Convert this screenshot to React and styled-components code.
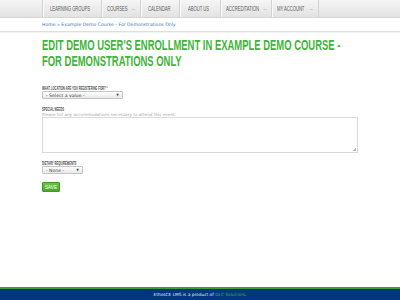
import React from 'react';
import styled, { createGlobalStyle } from 'styled-components';

const GlobalStyle = createGlobalStyle`
  html, body {
    margin: 0;
    padding: 0;
    background: #ffffff;
  }
  body {
    font-family: "Liberation Sans", Arial, sans-serif;
  }
  #root {
    min-height: 300px;
  }
`;

const Page = styled.div`
  display: flex;
  flex-direction: column;
  min-height: 300px;
  width: 400px;
`;

const NavBar = styled.nav`
  height: 17px;
  background: linear-gradient(#f6f6f6, #e2e2e2);
  border-bottom: 1px solid #d6d6d6;
  display: flex;
  justify-content: center;
`;

const NavInner = styled.ul`
  list-style: none;
  margin: 0;
  padding: 0;
  width: 316px;
  display: flex;
`;

const NavItem = styled.li`
  width: ${p => p.$w}px;
  flex: none;
  display: flex;
  align-items: center;
  justify-content: center;
  gap: 3px;
  border-left: 1px solid #d2d2d2;
  box-shadow: inset 1px 0 0 #fafafa;
  font-family: "Liberation Sans", Arial, sans-serif;
  font-size: 6.4px;
  color: #5e5e5e;
  text-transform: uppercase;
  white-space: nowrap;
  &:last-child {
    border-right: 1px solid #d2d2d2;
  }
`;

const NavLabel = styled.span`
  display: inline-block;
  width: ${p => p.$w}px;
  white-space: nowrap;
  transform: scaleX(0.66);
  transform-origin: left center;
  letter-spacing: -0.1px;
`;

const Caret = styled.span`
  color: #a8a8a8;
  font-size: 5px;
`;

const Crumbs = styled.div`
  display: flex;
  justify-content: center;
  border-bottom: 1px solid #dedede;
  box-shadow: 0 1px 1px rgba(0, 0, 0, 0.05);
  padding: 4px 0 4px;
`;

const CrumbText = styled.div`
  width: 316px;
  font-family: "DejaVu Sans", sans-serif;
  font-size: 4.6px;
  color: #3d72b8;
`;

const Content = styled.main`
  width: 316px;
  margin: 0 auto;
  flex: 1;
  padding-top: 5px;
`;

const Title = styled.h1`
  margin: 0 0 17px;
  font-family: "Liberation Sans", Arial, sans-serif;
  font-weight: bold;
  font-size: 15px;
  color: #3fb53a;
  text-transform: uppercase;
  white-space: nowrap;
  transform: scaleX(0.63);
  transform-origin: left top;
`;

const TitleLine = styled.span`
  display: block;
  height: 16px;
  line-height: 16px;
`;

const Field = styled.div`
  display: flex;
  flex-direction: column;
  align-items: flex-start;
  margin-bottom: ${p => p.$gap || 8}px;
`;

const Label = styled.label`
  display: inline-block;
  font-family: "Liberation Sans", Arial, sans-serif;
  font-weight: bold;
  font-size: 4.8px;
  line-height: 5px;
  color: #4a4a4a;
  text-transform: uppercase;
  white-space: nowrap;
  transform: scaleX(0.57);
  transform-origin: left center;
`;

const Required = styled.span`
  color: #d03030;
`;

const Hint = styled.div`
  font-family: "DejaVu Sans", sans-serif;
  font-size: 4.2px;
  line-height: 5px;
  color: #a8a8a8;
`;

const Select = styled.div`
  width: ${p => p.$w}px;
  height: 8px;
  box-sizing: border-box;
  border: 1px solid #c4c4c4;
  border-radius: 1px;
  background: linear-gradient(#ffffff, #e8e8e8);
  display: flex;
  align-items: center;
  justify-content: space-between;
  padding: 0 3px;
  font-family: "DejaVu Sans", sans-serif;
  font-size: 4.6px;
  color: #444;
`;

const Arrow = styled.span`
  font-size: 3.5px;
  color: #555;
`;

const TextArea = styled.div`
  width: 316px;
  height: 36px;
  box-sizing: border-box;
  border: 1px solid #dadada;
  position: relative;
`;

const Grip = styled.span`
  position: absolute;
  right: 1px;
  bottom: 1px;
  width: 3px;
  height: 3px;
  background: linear-gradient(135deg, transparent 50%, #bbb 50%);
`;

const SaveButton = styled.button`
  display: flex;
  align-items: center;
  justify-content: center;
  width: 18px;
  height: 10px;
  padding: 0;
  border: 1px solid #3f9a22;
  border-radius: 1px;
  background: linear-gradient(#6cc63c, #4aa82a);
  color: #fff;
  font-family: "Liberation Sans", Arial, sans-serif;
  font-size: 4.6px;
  text-transform: uppercase;
`;

const Footer = styled.footer`
  border-top: 2px solid #3c9e3c;
  background: #003580;
  height: 11px;
  display: flex;
  align-items: center;
  justify-content: center;
  font-family: "DejaVu Sans", sans-serif;
  font-size: 4.3px;
  color: #e8eef8;
`;

const FooterLink = styled.span`
  color: #3fb53a;
  margin-left: 1.5px;
`;

const navItems = [
  { label: 'Learning Groups', w: 58, tw: 44 },
  { label: 'Courses', w: 38, tw: 22, caret: true },
  { label: 'Calendar', w: 38, tw: 25 },
  { label: 'About Us', w: 40, tw: 24 },
  { label: 'Accreditation', w: 50, tw: 35, caret: true },
  { label: 'My Account', w: 46, tw: 30, caret: true },
];

export default function App() {
  return (
    <>
      <GlobalStyle />
      <Page>
        <NavBar>
          <NavInner>
            {navItems.map(item => (
              <NavItem key={item.label} $w={item.w}>
                <NavLabel $w={item.tw}>{item.label}</NavLabel>
                {item.caret && <Caret>–</Caret>}
              </NavItem>
            ))}
          </NavInner>
        </NavBar>
        <Crumbs>
          <CrumbText>Home » Example Demo Course - For Demonstrations Only</CrumbText>
        </Crumbs>
        <Content>
          <Title>
            <TitleLine>Edit Demo User's Enrollment in Example Demo Course -</TitleLine>
            <TitleLine>For Demonstrations Only</TitleLine>
          </Title>
          <Field>
            <Label>
              What location are you registering for? <Required>*</Required>
            </Label>
            <Select $w={81}>
              - Select a value -<Arrow>▼</Arrow>
            </Select>
          </Field>
          <Field>
            <Label>Special Needs</Label>
            <Hint>Please list any accommodations necessary to attend this event.</Hint>
            <TextArea>
              <Grip />
            </TextArea>
          </Field>
          <Field $gap={8}>
            <Label>Dietary Requirements</Label>
            <Select $w={41}>
              - None -<Arrow>▼</Arrow>
            </Select>
          </Field>
          <SaveButton>Save</SaveButton>
        </Content>
        <Footer>
          EthosCE LMS is a product of<FooterLink>DLC Solutions</FooterLink>.
        </Footer>
      </Page>
    </>
  );
}
